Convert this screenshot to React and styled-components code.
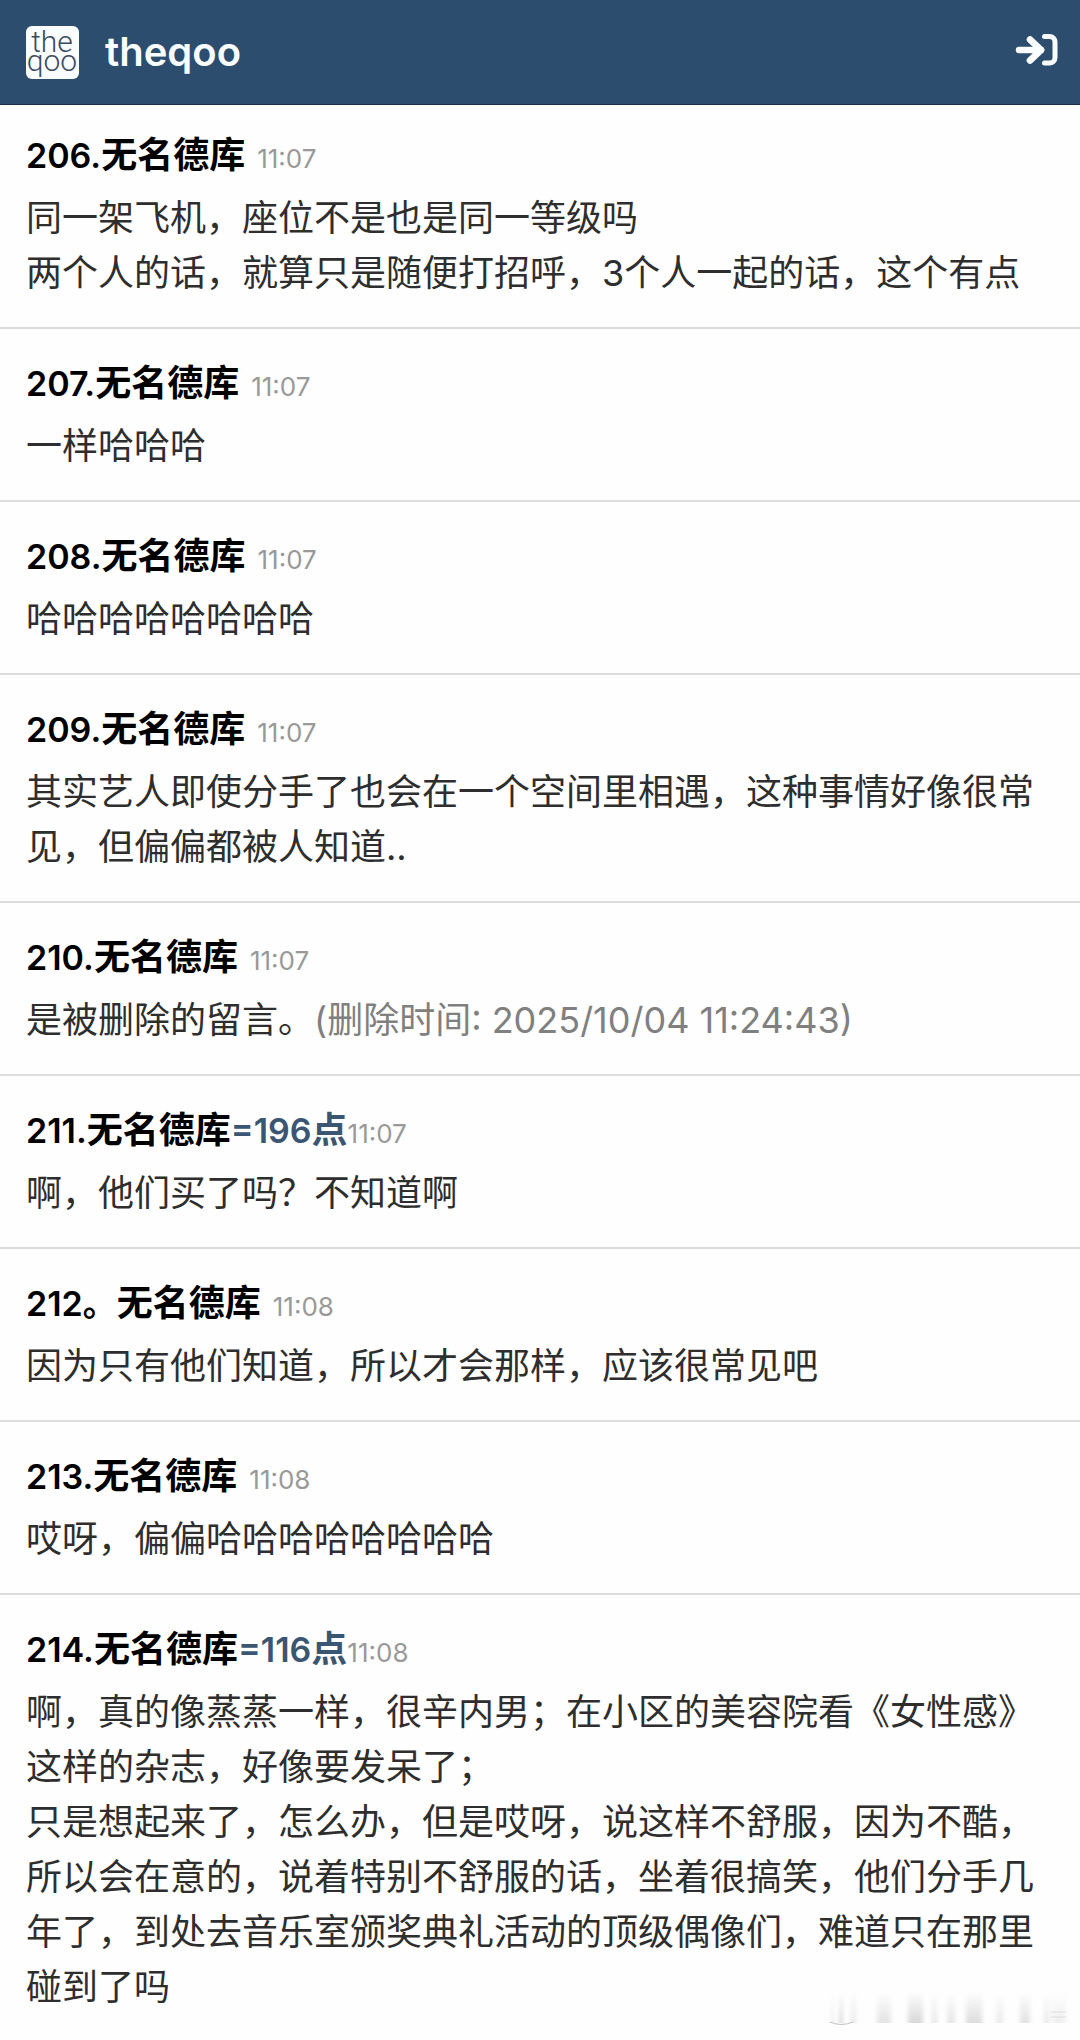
import React from "react";
import styled, { createGlobalStyle } from "styled-components";

const comments = [
  {
    id: "206.",
    time: "11:07",
    lines: [
      "同一架飞机，座位不是也是同一等级吗",
      "两个人的话，就算只是随便打招呼，3个人一起的话，这个有点",
    ],
  },
  { id: "207.", time: "11:07", lines: ["一样哈哈哈"] },
  { id: "208.", time: "11:07", lines: ["哈哈哈哈哈哈哈哈"] },
  {
    id: "209.",
    time: "11:07",
    lines: [
      "其实艺人即使分手了也会在一个空间里相遇，这种事情好像很常见，但偏偏都被人知道..",
    ],
  },
  {
    id: "210.",
    time: "11:07",
    lines: ["是被删除的留言。"],
    deleted: "(删除时间: 2025/10/04 11:24:43)",
  },
  {
    id: "211.",
    time: "11:07",
    replyTo: "196",
    lines: ["啊，他们买了吗？不知道啊"],
  },
  {
    id: "212。",
    time: "11:08",
    lines: ["因为只有他们知道，所以才会那样，应该很常见吧"],
  },
  { id: "213.", time: "11:08", lines: ["哎呀，偏偏哈哈哈哈哈哈哈哈"] },
  {
    id: "214.",
    time: "11:08",
    replyTo: "116",
    lines: [
      "啊，真的像蒸蒸一样，很辛内男；在小区的美容院看《女性感》",
      "这样的杂志，好像要发呆了；",
      "只是想起来了，怎么办，但是哎呀，说这样不舒服，因为不酷，所以会在意的，说着特别不舒服的话，坐着很搞笑，他们分手几年了，到处去音乐室颁奖典礼活动的顶级偶像们，难道只在那里碰到了吗",
    ],
  },
];

function Comment({ comment }) {
  return (
    <Item>
      <Meta>
        <Author>
          <Num>{comment.id}</Num>
          无名德库
        </Author>
        {comment.replyTo && (
          <ReplyLink href={"#" + comment.replyTo}>
            <Num>={comment.replyTo}</Num>点
          </ReplyLink>
        )}
        <Time $spaced={!comment.replyTo}>{comment.time}</Time>
      </Meta>
      {comment.lines.map((line, index) => (
        <Text key={index}>
          {line}
          {comment.deleted && <Deleted>{comment.deleted}</Deleted>}
        </Text>
      ))}
    </Item>
  );
}

// Faded vertical strips in the bottom right corner: [x, width, opacity]
const strips = [
  [3, 4, 0.12],
  [11, 4, 0.3],
  [23, 5, 0.18],
  [49, 14, 0.22],
  [80, 15, 0.32],
  [104, 5, 0.2],
  [119, 8, 0.2],
  [138, 16, 0.28],
  [168, 7, 0.16],
  [192, 10, 0.24],
  [216, 5, 0.18],
  [224, 14, 0.12],
];

function Strips() {
  return (
    <StripsSvg viewBox="0 0 244 40" aria-hidden="true">
      <defs>
        <linearGradient id="fade" x1="0" y1="0" x2="0" y2="1">
          <stop offset="0" stopColor="#888" stopOpacity="0" />
          <stop offset="1" stopColor="#888" stopOpacity="1" />
        </linearGradient>
        <filter id="soft" x="-50%" width="200%">
          <feGaussianBlur stdDeviation="2 0.6" />
        </filter>
      </defs>
      {strips.map(([x, width, opacity]) => (
        <rect
          key={x}
          x={x}
          y="3"
          width={width}
          height="31"
          fill="url(#fade)"
          opacity={opacity}
          filter="url(#soft)"
        />
      ))}
      <path d="M2 33 Q13 38 25 33" fill="none" stroke="#999" opacity="0.6" />
      <path d="M222 23 H238 M222 28 H238" stroke="#aaa" opacity="0.3" />
    </StripsSvg>
  );
}

function App() {
  return (
    <Container>
      <GlobalStyle />
      <Header>
        <Brand href="#top">
          <Logo viewBox="0 0 53 53" aria-hidden="true">
            <rect width="53" height="53" rx="6" fill="#fafdff" />
            <LogoText>
              <tspan x="26" y="26">
                the
              </tspan>
              <tspan x="26" y="45">
                qoo
              </tspan>
            </LogoText>
          </Logo>
          <BrandName>theqoo</BrandName>
        </Brand>
        <LoginButton type="button" aria-label="登录">
          <svg width="44" height="34" viewBox="0 0 44 34" fill="none">
            <g stroke="#fafdff" strokeLinecap="round" strokeLinejoin="round">
              <path d="M4 17H26" strokeWidth="6.6" />
              <path d="M15 6.5L26 17L15 27.5" strokeWidth="6.6" />
              <path
                d="M29.500 3.500H34.500a5.500 5.500 0 0 1 5.500 5.500V24.500a5.500 5.500 0 0 1-5.500 5.500H29.500"
                strokeWidth="5"
              />
            </g>
          </svg>
        </LoginButton>
      </Header>
      <main>
        {comments.map((comment) => (
          <Comment key={comment.id} comment={comment} />
        ))}
      </main>
      <Strips />
    </Container>
  );
}

export default App;

const GlobalStyle = createGlobalStyle`
  body {
    margin: 0;
    background: #fefefe;
    font-family: Inter, "Noto Sans CJK SC", sans-serif;
    text-spacing-trim: space-all;
  }
`;

const Container = styled.div`
  position: relative;
`;

const Header = styled.header`
  display: flex;
  align-items: center;
  justify-content: space-between;
  height: 104px;
  padding: 0 21px 0 26px;
  background: #2c4d6e;
  border-bottom: 1px solid #1c2f4a;
`;

const Brand = styled.a`
  display: flex;
  align-items: center;
  gap: 26px;
  color: #fafdff;
  text-decoration: none;
`;

const Logo = styled.svg`
  width: 53px;
  height: 53px;
  overflow: visible;
`;

const LogoText = styled.text`
  font-family: Roboto, sans-serif;
  font-size: 30px;
  font-weight: 300;
  fill: #3c4b5c;
  text-anchor: middle;
`;

const BrandName = styled.span`
  font-size: 40px;
  font-weight: 600;
  line-height: 48px;
`;

const LoginButton = styled.button`
  display: flex;
  padding: 0 0 4px;
  border: 0;
  background: none;
  cursor: pointer;
`;

const Item = styled.article`
  padding: 30px 26px 26px;
  border-bottom: 2px solid #dcdcdc;

  &:first-child {
    padding-top: 26px;
  }

  &:last-child {
    padding-bottom: 18px;
    border-bottom: 0;
  }
`;

const Meta = styled.div`
  display: flex;
  align-items: baseline;
  height: 48px;
  margin-bottom: 12px;
  font-size: 36px;
  line-height: 48px;
`;

const Author = styled.strong`
  color: #000;
  font-weight: 600;
`;

const Num = styled.span`
  font-size: 34px;
`;

const ReplyLink = styled.a`
  color: #3a5672;
  font-weight: 600;
  text-decoration: none;
`;

const Time = styled.time`
  margin-left: ${(props) => (props.$spaced ? "12px" : "0")};
  color: #999;
  font-size: 26px;
`;

const Text = styled.p`
  margin: 0;
  color: #2e2e2e;
  font-size: 36px;
  line-height: 55px;
`;

const Deleted = styled.span`
  color: #808080;
`;

const StripsSvg = styled.svg`
  position: absolute;
  right: 8px;
  bottom: 4px;
  width: 244px;
  height: 40px;
`;
